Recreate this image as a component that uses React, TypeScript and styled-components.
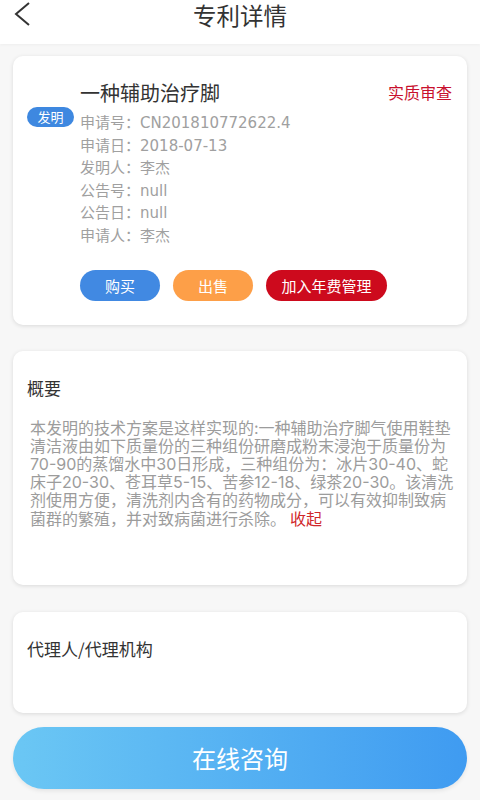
import React from "react";
import styled, { createGlobalStyle } from "styled-components";

const Global = createGlobalStyle`
  html, body { margin: 0; padding: 0; background: #f7f7f7; }
  body { font-family: Inter, "Noto Sans CJK SC", sans-serif; font-variant-numeric: proportional-nums; }
  * { box-sizing: border-box; }
`;

const Page = styled.div`
  width: 480px;
  min-height: 800px;
  background: #f7f7f7;
  display: flex;
  flex-direction: column;
`;

const Header = styled.header`
  height: 44px;
  background: #fff;
  box-shadow: 0 1px 3px rgba(0, 0, 0, 0.04);
  position: relative;
  display: flex;
  justify-content: center;
`;

const BackButton = styled.button`
  position: absolute;
  left: 10px;
  top: 0;
  width: 24px;
  height: 28px;
  padding: 0;
  border: none;
  background: none;
  display: flex;
  align-items: center;
  justify-content: center;
`;

const Title = styled.h1`
  margin: 0;
  font-family: "Noto Sans CJK SC", sans-serif;
  font-size: 23.5px;
  font-weight: 400;
  line-height: 30px;
  color: #333;
`;

const Card = styled.section<{ $h?: number; $mt: number }>`
  margin: ${(p) => p.$mt}px 13px 0;
  background: #fff;
  border-radius: 10px;
  box-shadow: 0 1px 4px rgba(0, 0, 0, 0.12);
  ${(p) => (p.$h ? `height: ${p.$h}px;` : "")}
`;

const InfoCard = styled(Card)`
  padding: 25px 15px 24px 14px;
  display: grid;
  grid-template-columns: 53px 1fr;
`;

const Badge = styled.div`
  margin-top: 26px;
  width: 47px;
  height: 20px;
  border-radius: 10px;
  background: #3e88e0;
  color: #fff;
  font-family: "Noto Sans CJK SC", sans-serif;
  font-size: 13px;
  line-height: 20px;
  text-align: center;
`;

const Main = styled.div`
  display: flex;
  flex-direction: column;
`;

const TitleRow = styled.div`
  display: flex;
  justify-content: space-between;
  align-items: flex-start;
`;

const PatentTitle = styled.div`
  width: 150px;
  font-family: "Noto Sans CJK SC", sans-serif;
  font-size: 20px;
  line-height: 22px;
  height: 24px;
  overflow: hidden;
  color: #333;
  padding-top: 1px;
`;

const Status = styled.span`
  font-family: "Noto Sans CJK SC", sans-serif;
  font-size: 16px;
  line-height: 22px;
  color: #c8102e;
`;

const Fields = styled.div`
  margin-top: 7px;
  display: flex;
  flex-direction: column;
`;

const Field = styled.div`
  font-family: "DejaVu Sans", "Noto Sans CJK SC", sans-serif;
  font-size: 15px;
  line-height: 22.6px;
  color: #a0a0a0;
`;

const Actions = styled.div`
  margin-top: 22px;
  display: flex;
  gap: 13px;
`;

const Pill = styled.button<{ $bg: string; $w: number }>`
  width: ${(p) => p.$w}px;
  height: 31px;
  border: none;
  border-radius: 16px;
  background: ${(p) => p.$bg};
  color: #fff;
  font-family: "Noto Sans CJK SC", sans-serif;
  font-size: 15px;
  padding: 0;
`;

const TextCard = styled(Card)`
  padding: 25px 13px 0 14px;
`;

const SectionTitle = styled.h2`
  margin: 0;
  font-family: "Noto Sans CJK SC", sans-serif;
  font-size: 17px;
  font-weight: 400;
  line-height: 24px;
  color: #333;
`;

const Summary = styled.p`
  margin: 19px 0 0 3px;
  width: 431px;
  font-size: 16px;
  line-height: 18.2px;
  color: #9c9c9c;
`;

const Collapse = styled.span`
  color: #d0272c;
  margin-left: 4px;
`;

const Consult = styled.button`
  margin: 14px 13px 11px;
  height: 62px;
  border: none;
  border-radius: 31px;
  background: linear-gradient(90deg, #6bc7f4 0%, #3f9bf1 100%);
  box-shadow: 0 2px 4px rgba(0, 0, 0, 0.08);
  color: #fff;
  font-family: "Noto Sans CJK SC", sans-serif;
  font-size: 24px;
`;

const fields = [
  ["申请号", "CN201810772622.4"],
  ["申请日", "2018-07-13"],
  ["发明人", "李杰"],
  ["公告号", "null"],
  ["公告日", "null"],
  ["申请人", "李杰"],
];

export default function App() {
  return (
    <Page>
      <Global />
      <Header>
        <BackButton aria-label="返回">
          <svg width="18" height="26" viewBox="0 0 18 26">
            <path d="M16 2 L3 13 L16 24" fill="none" stroke="#333" strokeWidth="2" />
          </svg>
        </BackButton>
        <Title>专利详情</Title>
      </Header>

      <InfoCard $mt={12}>
        <div>
          <Badge>发明</Badge>
        </div>
        <Main>
          <TitleRow>
            <PatentTitle>一种辅助治疗脚气使用鞋垫清洁液</PatentTitle>
            <Status>实质审查</Status>
          </TitleRow>
          <Fields>
            {fields.map(([k, v]) => (
              <Field key={k}>
                {k}：{v}
              </Field>
            ))}
          </Fields>
          <Actions>
            <Pill $bg="#4189e2" $w={80}>购买</Pill>
            <Pill $bg="#fd9f48" $w={80}>出售</Pill>
            <Pill $bg="#cd0a1d" $w={121}>加入年费管理</Pill>
          </Actions>
        </Main>
      </InfoCard>

      <TextCard $mt={26} $h={234}>
        <SectionTitle>概要</SectionTitle>
        <Summary>
          本发明的技术方案是这样实现的:一种辅助治疗脚气使用鞋垫清洁液由如下质量份的三种组份研磨成粉末浸泡于质量份为70-90的蒸馏水中30日形成，三种组份为：冰片30-40、蛇床子20-30、苍耳草5-15、苦参12-18、绿茶20-30。该清洗剂使用方便，清洗剂内含有的药物成分，可以有效抑制致病菌群的繁殖，并对致病菌进行杀除。
          <Collapse>收起</Collapse>
        </Summary>
      </TextCard>

      <TextCard $mt={27} $h={101}>
        <SectionTitle>代理人/代理机构</SectionTitle>
      </TextCard>

      <Consult>在线咨询</Consult>
    </Page>
  );
}
